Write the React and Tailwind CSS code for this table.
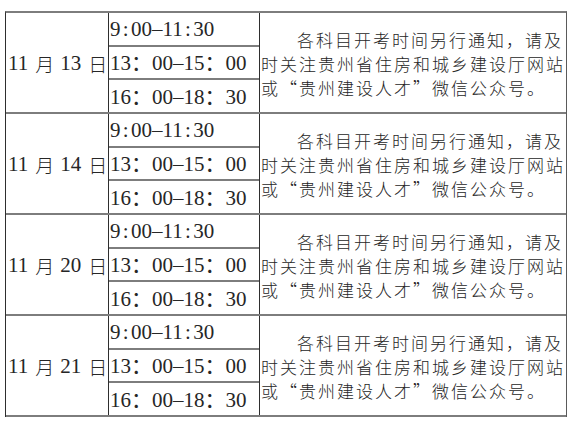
import React from "react";

const serif = { fontFamily: "'Liberation Serif', 'Noto Sans CJK SC', serif" };
const cjk = { fontFamily: "'Noto Sans CJK SC', sans-serif" };

const groups = ["13", "14", "20", "21"];

function HalfColon() {
  return <span className="inline-block w-[10.5px] text-center">:</span>;
}

function TimeRow({ children, last }) {
  return (
    <div
      className={
        "flex-1 flex items-center pl-[1px] pt-[2px] text-[21px] leading-none text-[#262626] " +
        (last ? "" : "border-b-2 border-b-[#7d7d7d]")
      }
      style={serif}
    >
      <span className="whitespace-pre">{children}</span>
    </div>
  );
}

function Group({ day }) {
  return (
    <div className="flex h-[101px] border-b-2 border-b-[#7d7d7d]">
      <div
        className="w-[103px] shrink-0 flex items-center pl-[2px] pt-[1px] border-r border-r-[#2e2e2e] text-[21px] leading-none text-[#262626] whitespace-pre"
        style={serif}
      >
        <span>11</span>
        <span className="text-[19px] font-light ml-[7px]" style={cjk}>月</span>
        <span className="ml-[6px]">{day}</span>
        <span className="text-[19px] font-light ml-[7px]" style={cjk}>日</span>
      </div>
      <div className="w-[151px] shrink-0 flex flex-col border-r border-r-[#2e2e2e]">
        <TimeRow>
          9<HalfColon />00–11<HalfColon />30
        </TimeRow>
        <TimeRow>13：00–15：00</TimeRow>
        <TimeRow last>16：00–18：30</TimeRow>
      </div>
      <div
        className="flex-1 flex flex-col justify-center pl-[1px] pt-[2px] text-[17px] font-light leading-[24px] tracking-[2px] text-[#262626] whitespace-nowrap"
        style={cjk}
      >
        <div className="indent-[36px]">各科目开考时间另行通知，请及</div>
        <div>时关注贵州省住房和城乡建设厅网站</div>
        <div>或“贵州建设人才”微信公众号。</div>
      </div>
    </div>
  );
}

export default function App() {
  return (
    <div className="w-[576px] h-[423px] bg-white pt-[11px] pl-[5px] overflow-hidden">
      <div className="w-[562px] border-t-2 border-t-[#7d7d7d] border-l border-l-[#2e2e2e] border-r border-r-[#5a5a5a]">
        {groups.map((d) => (
          <Group key={d} day={d} />
        ))}
      </div>
    </div>
  );
}
